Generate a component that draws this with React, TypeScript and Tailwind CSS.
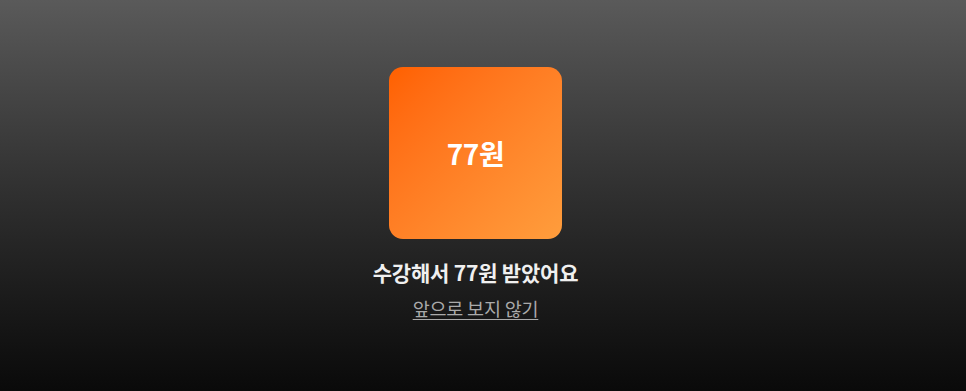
export default function App() {
  return (
    <div
      className="flex h-[391px] w-full flex-col items-center bg-gradient-to-b from-[#5a5a5a] to-[#0a0a0a] pr-[15px] pt-[67px]"
      style={{ fontFamily: '"Noto Sans CJK KR", "Noto Sans", sans-serif' }}
    >
      <div className="flex h-[172px] w-[173px] items-center justify-center rounded-[14px] bg-gradient-to-br from-[#ff6000] to-[#ff9d3c]">
        <span className="text-[28px] font-bold leading-[36px] tracking-[-0.5px] text-white">77원</span>
      </div>
      <div className="mt-[19px] text-[21px] font-bold leading-[28px] tracking-[-0.2px] text-[#f0f0f0]">
        수강해서 77원 받았어요
      </div>
      <button
        type="button"
        className="mt-[9px] text-[18.5px] leading-[26px] tracking-[-0.2px] text-[#aaaaaa] underline underline-offset-[3px]"
      >
        앞으로 보지 않기
      </button>
    </div>
  );
}
